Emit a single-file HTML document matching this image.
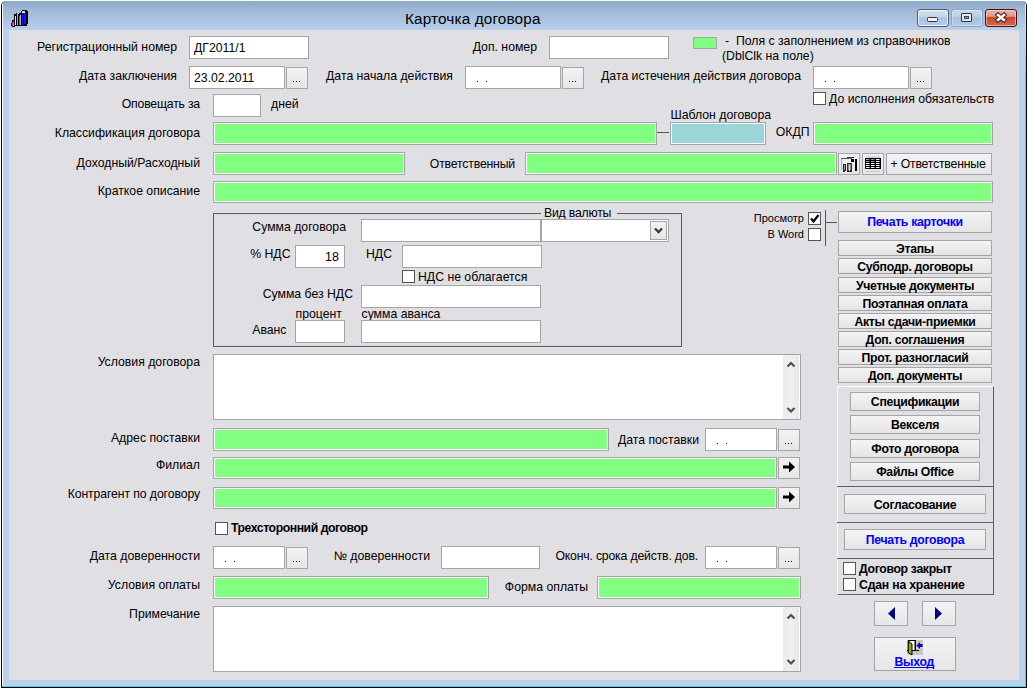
<!DOCTYPE html>
<html><head><meta charset="utf-8">
<style>
*{box-sizing:border-box;margin:0;padding:0}
html,body{width:1027px;height:690px;overflow:hidden;background:#fff;font-family:"Liberation Sans",sans-serif;color:#000}
#win{position:absolute;left:1px;top:1px;width:1026px;height:687px;border-left:1px solid #000;border-right:1px solid #000;border-bottom:1px solid #000;border-radius:5px 5px 0 0;background:#b9d1ea;overflow:hidden}
#title{position:absolute;left:0;top:0;width:1024px;height:29px;background:linear-gradient(#8ea8c8,#9fb8d6 30%,#b8d0ec)}
#client{position:absolute;left:9px;top:30px;width:1010px;height:650px;background:#e0dfe3}
.l{position:absolute;white-space:nowrap}
.in{position:absolute;background:#fff;border:1px solid #a5a5a5}
.g{position:absolute;background:#80ff80;border:1px solid #a5a5a5;box-shadow:inset 0 0 0 1px #fff}
.btn{position:absolute;border:1px solid #a5a5a5;background:linear-gradient(#f3f3f3,#e6e6e6)}
.dd{position:absolute;left:0;right:0;bottom:4px;text-align:center;font-size:11px;line-height:11px;letter-spacing:-0.5px}
.dt{position:absolute;left:10px;top:3px;font-size:12px;line-height:14px}
.bb{position:absolute;border:1px solid #a5a5a5;background:linear-gradient(#f4f4f4,#e4e4e4);font-weight:bold;font-size:12.25px;letter-spacing:-0.3px;text-align:center;white-space:nowrap}
.cb{position:absolute;background:#fff;border:1px solid #555}
</style></head><body>
<div id="win"><div id="title"></div></div>
<div id="client"></div>

<div style="position:absolute;left:917px;top:9px;width:32px;height:18px;border:1px solid #4b5b73;border-radius:3px;background:linear-gradient(#d6e3f2 0,#c4d6ec 40%,#aac4e2 45%,#b4cbe6 100%);box-shadow:inset 0 0 0 1px rgba(255,255,255,.75)"></div>
<div style="position:absolute;left:927px;top:17px;width:11px;height:5px;border:1px solid #2f3640;border-radius:1.5px;background:#f4efef"></div>
<div style="position:absolute;left:951px;top:9px;width:32px;height:18px;border:1px solid #8ea5c2;border-radius:3px;background:linear-gradient(#c8d9ee 0,#bcd0ea 40%,#a8c1df 45%,#b2c9e5 100%);box-shadow:inset 0 0 0 1px rgba(255,255,255,.35)"></div>
<div style="position:absolute;left:961px;top:13px;width:11px;height:9px;border:1px solid #2f3640;border-radius:1px;background:#e8e8ea"></div>
<div style="position:absolute;left:964px;top:16px;width:5px;height:3px;border:1px solid #3a4250;background:#8fb0d8"></div>
<div style="position:absolute;left:985px;top:9px;width:32px;height:18px;border:1px solid #4a0e10;border-radius:3px;background:linear-gradient(#eab2a6 0,#df9888 40%,#c8472c 45%,#d26b52 100%);box-shadow:inset 0 0 0 1px rgba(255,220,210,.6)"></div>
<svg style="position:absolute;left:994px;top:12px" width="14" height="11" viewBox="0 0 14 11"><path d="M4 3 L10 8 M10 3 L4 8" stroke="#3a1010" stroke-width="4.4" stroke-linecap="square"/><path d="M4 3 L10 8 M10 3 L4 8" stroke="#fff" stroke-width="2.6" stroke-linecap="square"/></svg>
<div style="position:absolute;left:2px;top:4px;width:1px;height:683px;background:#fff"></div>
<div style="position:absolute;left:1025px;top:4px;width:1px;height:683px;background:linear-gradient(#dff0fb 0,#b8e6f8 26px,#3fd6f2 70px)"></div>
<div style="position:absolute;left:2px;top:686px;width:1024px;height:1px;background:#3fd6f2"></div>
<svg style="position:absolute;left:9px;top:8px" width="20" height="20" viewBox="0 0 20 20"><rect x="5" y="6" width="2" height="12" fill="#000"/><rect x="7" y="5" width="5" height="13" fill="#000"/><rect x="12" y="3" width="6" height="15" fill="#000"/><rect x="13" y="2" width="5" height="1" fill="#000"/><rect x="18" y="3" width="1" height="13" fill="#000"/><rect x="17" y="16" width="1" height="1" fill="#000"/><rect x="6" y="8" width="1" height="9" fill="#e4e4dc"/><rect x="8" y="6" width="1" height="11" fill="#a8a8a8"/><rect x="8" y="5" width="2" height="1" fill="#d8d0c0"/><rect x="10" y="8" width="1" height="9" fill="#ff1a1a"/><rect x="11" y="7" width="1" height="10" fill="#b8b8b8"/><rect x="13" y="5" width="1" height="12" fill="#1414ff"/><rect x="15" y="4" width="2" height="12" fill="#1414ff"/><rect x="13" y="3" width="3" height="2" fill="#e8dcc8"/><rect x="2" y="15" width="1" height="3" fill="#000"/><rect x="3" y="12" width="2" height="3" fill="#000"/><rect x="3" y="15" width="1" height="3" fill="#ff00ff"/><rect x="4" y="13" width="1" height="2" fill="#ff00ff"/><rect x="3" y="18" width="3" height="1" fill="#000"/></svg>
<div class="l" style="top:10px;font-size:15.3px;line-height:18px;left:405px;letter-spacing:0.15px;">Карточка договора</div>
<div class="l" style="top:40px;font-size:12.25px;line-height:14px;right:850px;text-align:right;">Регистрационный номер</div>
<div class="in" style="left:189px;top:36px;width:120px;height:23px;"></div>
<div class="l" style="top:41px;font-size:12.25px;line-height:14px;left:194px;">ДГ2011/1</div>
<div class="l" style="top:40px;font-size:12.25px;line-height:14px;right:490px;text-align:right;">Доп. номер</div>
<div class="in" style="left:549px;top:36px;width:120px;height:23px;"></div>
<div class="g" style="left:693px;top:37px;width:24px;height:12px;box-shadow:none"></div>
<div class="l" style="top:34px;font-size:12.25px;line-height:14px;left:725px;">-&nbsp; Поля с заполнением из справочников</div>
<div class="l" style="top:49px;font-size:12.25px;line-height:14px;left:722px;">(DblClk на поле)</div>
<div class="l" style="top:69px;font-size:12.25px;line-height:14px;right:850px;text-align:right;">Дата заключения</div>
<div class="in" style="left:189px;top:66px;width:96px;height:23px;"></div>
<div class="l" style="top:71px;font-size:12.25px;line-height:14px;left:194px;">23.02.2011</div>
<div class="btn" style="left:286px;top:67px;width:22px;height:22px;"></div>
<div style="position:absolute;left:293px;top:81px;width:1px;height:1px;background:#000"></div>
<div style="position:absolute;left:296px;top:81px;width:1px;height:1px;background:#000"></div>
<div style="position:absolute;left:299px;top:81px;width:1px;height:1px;background:#000"></div>
<div class="l" style="top:69px;font-size:12.25px;line-height:14px;right:574px;text-align:right;">Дата начала действия</div>
<div class="in" style="left:465px;top:66px;width:96px;height:23px;"></div>
<div style="position:absolute;left:477px;top:81px;width:1px;height:1px;background:#000"></div>
<div style="position:absolute;left:486px;top:81px;width:1px;height:1px;background:#000"></div>
<div class="btn" style="left:562px;top:67px;width:22px;height:22px;"></div>
<div style="position:absolute;left:569px;top:81px;width:1px;height:1px;background:#000"></div>
<div style="position:absolute;left:572px;top:81px;width:1px;height:1px;background:#000"></div>
<div style="position:absolute;left:575px;top:81px;width:1px;height:1px;background:#000"></div>
<div class="l" style="top:69px;font-size:12.25px;line-height:14px;right:226px;text-align:right;">Дата истечения действия договора</div>
<div class="in" style="left:813px;top:66px;width:96px;height:23px;"></div>
<div style="position:absolute;left:825px;top:81px;width:1px;height:1px;background:#000"></div>
<div style="position:absolute;left:834px;top:81px;width:1px;height:1px;background:#000"></div>
<div class="btn" style="left:910px;top:67px;width:22px;height:22px;"></div>
<div style="position:absolute;left:917px;top:81px;width:1px;height:1px;background:#000"></div>
<div style="position:absolute;left:920px;top:81px;width:1px;height:1px;background:#000"></div>
<div style="position:absolute;left:923px;top:81px;width:1px;height:1px;background:#000"></div>
<div class="l" style="top:97px;font-size:12.25px;line-height:14px;right:827px;text-align:right;letter-spacing:-0.2px;">Оповещать за</div>
<div class="in" style="left:213px;top:94px;width:48px;height:23px;"></div>
<div class="l" style="top:97px;font-size:12.25px;line-height:14px;left:271px;">дней</div>
<div class="cb" style="left:813px;top:92px;width:13px;height:13px;"></div>
<div class="l" style="top:92px;font-size:12.25px;line-height:14px;left:829px;">До исполнения обязательств</div>
<div class="l" style="top:108px;font-size:12.25px;line-height:14px;left:670.5px;">Шаблон договора</div>
<div class="l" style="top:126px;font-size:12.25px;line-height:14px;right:827px;text-align:right;">Классификация договора</div>
<div class="g" style="left:213px;top:122px;width:444px;height:23px;"></div>
<div style="position:absolute;left:657px;top:132px;width:12px;height:1px;background:#555"></div>
<div style="position:absolute;left:670px;top:122px;width:96px;height:23px;background:#9ad5d9;border:1px solid #a5a5a5;box-shadow:inset 0 0 0 1px #fff"></div>
<div class="l" style="top:125px;font-size:12.25px;line-height:14px;right:217.5px;text-align:right;">ОКДП</div>
<div class="g" style="left:813px;top:122px;width:180px;height:23px;"></div>
<div class="l" style="top:156px;font-size:12.25px;line-height:14px;right:827px;text-align:right;">Доходный/Расходный</div>
<div class="g" style="left:213px;top:152px;width:192px;height:23px;"></div>
<div class="l" style="top:157px;font-size:12.25px;line-height:14px;right:512px;text-align:right;letter-spacing:-0.18px;">Ответственный</div>
<div class="g" style="left:525px;top:152px;width:312px;height:23px;"></div>
<div class="btn" style="left:838px;top:153px;width:22px;height:22px;"></div>
<div class="btn" style="left:862px;top:153px;width:22px;height:22px;"></div>
<div class="btn" style="left:886px;top:153px;width:106px;height:22px;"></div>
<div class="l" style="top:157px;font-size:12.25px;line-height:14px;left:938px;transform:translateX(-50%);letter-spacing:-0.2px;">+ Ответственные</div>
<div class="l" style="top:184px;font-size:12.25px;line-height:14px;right:827px;text-align:right;">Краткое описание</div>
<div class="g" style="left:213px;top:181px;width:780px;height:22px;"></div>
<div style="position:absolute;left:213px;top:213px;width:469px;height:134px;border:1px solid #5a5a5a"></div>
<div style="position:absolute;left:541px;top:205px;width:76px;height:14px;background:#e0dfe3"></div>
<div class="l" style="top:206px;font-size:12.25px;line-height:14px;left:544px;letter-spacing:-0.2px;">Вид валюты</div>
<div class="l" style="top:220px;font-size:12.25px;line-height:14px;right:681px;text-align:right;">Сумма договора</div>
<div class="in" style="left:361px;top:219px;width:180px;height:23px;"></div>
<div class="in" style="left:541px;top:219px;width:128px;height:23px;"></div>
<div class="btn" style="left:650px;top:221px;width:17px;height:19px;"></div>
<div class="l" style="top:247px;font-size:12.25px;line-height:14px;right:736.5px;text-align:right;">% НДС</div>
<div class="in" style="left:295px;top:245px;width:50px;height:23px;"></div>
<div class="l" style="top:250px;font-size:12.5px;line-height:14px;right:688px;text-align:right;">18</div>
<div class="l" style="top:247px;font-size:12.25px;line-height:14px;right:635px;text-align:right;">НДС</div>
<div class="in" style="left:402px;top:245px;width:140px;height:23px;"></div>
<div class="cb" style="left:402px;top:270px;width:13px;height:13px;"></div>
<div class="l" style="top:270px;font-size:12.25px;line-height:14px;left:418px;">НДС не облагается</div>
<div class="l" style="top:287px;font-size:12.25px;line-height:14px;right:674px;text-align:right;">Сумма без НДС</div>
<div class="in" style="left:361px;top:285px;width:180px;height:23px;"></div>
<div class="l" style="top:307px;font-size:12.25px;line-height:14px;left:295.5px;">процент</div>
<div class="l" style="top:307px;font-size:12.25px;line-height:14px;left:361.5px;">сумма аванса</div>
<div class="l" style="top:323px;font-size:12.25px;line-height:14px;right:740.5px;text-align:right;">Аванс</div>
<div class="in" style="left:295px;top:320px;width:50px;height:23px;"></div>
<div class="in" style="left:361px;top:320px;width:180px;height:23px;"></div>
<div class="l" style="top:355px;font-size:12.25px;line-height:14px;right:827px;text-align:right;">Условия договора</div>
<div class="in" style="left:213px;top:354px;width:588px;height:66px;"></div>
<div class="l" style="top:431px;font-size:12.25px;line-height:14px;right:827px;text-align:right;">Адрес поставки</div>
<div class="g" style="left:213px;top:428px;width:396px;height:23px;"></div>
<div class="l" style="top:433px;font-size:12.25px;line-height:14px;right:328px;text-align:right;">Дата поставки</div>
<div class="in" style="left:705px;top:428px;width:72px;height:23px;"></div>
<div style="position:absolute;left:717px;top:443px;width:1px;height:1px;background:#000"></div>
<div style="position:absolute;left:726px;top:443px;width:1px;height:1px;background:#000"></div>
<div class="btn" style="left:778px;top:429px;width:22px;height:22px;"></div>
<div style="position:absolute;left:785px;top:443px;width:1px;height:1px;background:#000"></div>
<div style="position:absolute;left:788px;top:443px;width:1px;height:1px;background:#000"></div>
<div style="position:absolute;left:791px;top:443px;width:1px;height:1px;background:#000"></div>
<div class="l" style="top:458px;font-size:12.25px;line-height:14px;right:827px;text-align:right;">Филиал</div>
<div class="g" style="left:213px;top:457px;width:564px;height:22px;"></div>
<div class="btn" style="left:778px;top:457px;width:22px;height:22px;"></div>
<div class="l" style="top:487px;font-size:12.25px;line-height:14px;right:827px;text-align:right;letter-spacing:-0.1px;">Контрагент по договору</div>
<div class="g" style="left:213px;top:487px;width:564px;height:22px;"></div>
<div class="btn" style="left:778px;top:487px;width:22px;height:22px;"></div>
<div class="cb" style="left:215px;top:522px;width:13px;height:13px;"></div>
<div class="l" style="top:521px;font-size:12.25px;line-height:14px;font-weight:bold;left:231px;letter-spacing:-0.45px;">Трехсторонний договор</div>
<div class="l" style="top:549px;font-size:12.25px;line-height:14px;right:827px;text-align:right;">Дата доверенности</div>
<div class="in" style="left:213px;top:546px;width:72px;height:23px;"></div>
<div style="position:absolute;left:225px;top:561px;width:1px;height:1px;background:#000"></div>
<div style="position:absolute;left:234px;top:561px;width:1px;height:1px;background:#000"></div>
<div class="btn" style="left:286px;top:547px;width:22px;height:22px;"></div>
<div style="position:absolute;left:293px;top:561px;width:1px;height:1px;background:#000"></div>
<div style="position:absolute;left:296px;top:561px;width:1px;height:1px;background:#000"></div>
<div style="position:absolute;left:299px;top:561px;width:1px;height:1px;background:#000"></div>
<div class="l" style="top:549px;font-size:12.25px;line-height:14px;right:597px;text-align:right;">№ доверенности</div>
<div class="in" style="left:441px;top:546px;width:99px;height:23px;"></div>
<div class="l" style="top:549px;font-size:12.25px;line-height:14px;right:329px;text-align:right;letter-spacing:-0.18px;">Оконч. срока действ. дов.</div>
<div class="in" style="left:705px;top:546px;width:72px;height:23px;"></div>
<div style="position:absolute;left:717px;top:561px;width:1px;height:1px;background:#000"></div>
<div style="position:absolute;left:726px;top:561px;width:1px;height:1px;background:#000"></div>
<div class="btn" style="left:778px;top:547px;width:22px;height:22px;"></div>
<div style="position:absolute;left:785px;top:561px;width:1px;height:1px;background:#000"></div>
<div style="position:absolute;left:788px;top:561px;width:1px;height:1px;background:#000"></div>
<div style="position:absolute;left:791px;top:561px;width:1px;height:1px;background:#000"></div>
<div class="l" style="top:578px;font-size:12.25px;line-height:14px;right:827px;text-align:right;">Условия оплаты</div>
<div class="g" style="left:213px;top:576px;width:276px;height:23px;"></div>
<div class="l" style="top:580px;font-size:12.25px;line-height:14px;right:439px;text-align:right;">Форма оплаты</div>
<div class="g" style="left:597px;top:576px;width:204px;height:23px;"></div>
<div class="l" style="top:607px;font-size:12.25px;line-height:14px;right:827px;text-align:right;">Примечание</div>
<div class="in" style="left:213px;top:606px;width:588px;height:66px;"></div>
<div class="l" style="top:211px;font-size:11px;line-height:14px;right:223px;text-align:right;">Просмотр</div>
<div class="l" style="top:227px;font-size:11px;line-height:14px;right:223px;text-align:right;">В Word</div>
<div class="cb" style="left:808px;top:212px;width:13px;height:13px;"></div>
<div class="cb" style="left:808px;top:228px;width:13px;height:13px;"></div>
<svg style="position:absolute;left:808px;top:212px" width="13" height="13" viewBox="0 0 13 13"><path d="M3 6.5 L5.5 9.5 L10.5 3" fill="none" stroke="#000" stroke-width="2.2"/></svg>
<div style="position:absolute;left:825px;top:210px;width:1px;height:36px;background:#555"></div>
<div style="position:absolute;left:825px;top:222px;width:12px;height:1px;background:#555"></div>
<div class="bb" style="left:838px;top:211px;width:154px;height:22px;color:#0000ff;line-height:20px">Печать карточки</div>
<div class="bb" style="left:838px;top:240px;width:154px;height:16px;line-height:16px">Этапы</div>
<div class="bb" style="left:838px;top:258px;width:154px;height:16px;line-height:16px">Субподр. договоры</div>
<div class="bb" style="left:838px;top:277px;width:154px;height:16px;line-height:16px">Учетные документы</div>
<div class="bb" style="left:838px;top:295px;width:154px;height:16px;line-height:16px">Поэтапная оплата</div>
<div class="bb" style="left:838px;top:313px;width:154px;height:16px;line-height:16px">Акты сдачи-приемки</div>
<div class="bb" style="left:838px;top:331px;width:154px;height:16px;line-height:16px">Доп. соглашения</div>
<div class="bb" style="left:838px;top:349px;width:154px;height:16px;line-height:16px">Прот. разногласий</div>
<div class="bb" style="left:838px;top:367px;width:154px;height:16px;line-height:16px">Доп. документы</div>
<div style="position:absolute;left:837px;top:386px;width:157px;height:209px;border-left:1px solid #fff;border-top:1px solid #fff;border-right:1px solid #5f5f5f;border-bottom:1px solid #5f5f5f"></div>
<div style="position:absolute;left:837px;top:486px;width:157px;height:1px;background:#5f5f5f"></div>
<div style="position:absolute;left:837px;top:522px;width:157px;height:1px;background:#5f5f5f"></div>
<div style="position:absolute;left:837px;top:558px;width:157px;height:1px;background:#5f5f5f"></div>
<div class="bb" style="left:850px;top:392px;width:130px;height:19px;line-height:19px">Спецификации</div>
<div class="bb" style="left:850px;top:415px;width:130px;height:19px;line-height:19px">Векселя</div>
<div class="bb" style="left:850px;top:439px;width:130px;height:19px;line-height:19px">Фото договора</div>
<div class="bb" style="left:850px;top:462px;width:130px;height:19px;line-height:19px">Файлы Office</div>
<div class="bb" style="left:844px;top:494px;width:142px;height:20px;line-height:20px">Согласование</div>
<div class="bb" style="left:844px;top:529px;width:142px;height:21px;line-height:20px;color:#0000ff">Печать договора</div>
<div class="cb" style="left:843px;top:562px;width:13px;height:13px;"></div>
<div class="cb" style="left:843px;top:578px;width:13px;height:13px;"></div>
<div class="l" style="top:562px;font-size:12.25px;line-height:14px;font-weight:bold;left:859px;letter-spacing:-0.34px;">Договор закрыт</div>
<div class="l" style="top:578px;font-size:12.25px;line-height:14px;font-weight:bold;left:859px;letter-spacing:-0.2px;">Сдан на хранение</div>
<div class="btn" style="left:874px;top:601px;width:34px;height:25px;"></div>
<div class="btn" style="left:922px;top:601px;width:34px;height:25px;"></div>
<div class="btn" style="left:874px;top:637px;width:82px;height:34px;"></div>
<div class="l" style="top:655px;font-size:12.25px;line-height:14px;font-weight:bold;color:#0000ff;left:894.5px;letter-spacing:-0.3px;">Выход</div>
<div style="position:absolute;left:894px;top:667px;width:40px;height:1px;background:#0000ff"></div>
<svg style="position:absolute;left:650px;top:221px" width="17" height="19" viewBox="0 0 17 19"><path d="M5 7.5 L8.5 11 L12 7.5" fill="none" stroke="#3c3c3c" stroke-width="2.4"/></svg>
<div style="position:absolute;left:783px;top:355px;width:16px;height:64px;background:linear-gradient(90deg,#eaeaea,#f0f0f0 50%,#e8e8e8)"></div>
<svg style="position:absolute;left:783px;top:361px" width="16" height="8" viewBox="0 0 16 8"><path d="M4.5 5.5 L8 2 L11.5 5.5" fill="none" stroke="#505050" stroke-width="2.2"/></svg>
<svg style="position:absolute;left:783px;top:406px" width="16" height="8" viewBox="0 0 16 8"><path d="M4.5 2 L8 5.5 L11.5 2" fill="none" stroke="#505050" stroke-width="2.2"/></svg>
<div style="position:absolute;left:783px;top:607px;width:16px;height:64px;background:linear-gradient(90deg,#eaeaea,#f0f0f0 50%,#e8e8e8)"></div>
<svg style="position:absolute;left:783px;top:613px" width="16" height="8" viewBox="0 0 16 8"><path d="M4.5 5.5 L8 2 L11.5 5.5" fill="none" stroke="#505050" stroke-width="2.2"/></svg>
<svg style="position:absolute;left:783px;top:658px" width="16" height="8" viewBox="0 0 16 8"><path d="M4.5 2 L8 5.5 L11.5 2" fill="none" stroke="#505050" stroke-width="2.2"/></svg>
<svg style="position:absolute;left:778px;top:457px" width="22" height="22" viewBox="0 0 22 22"><path d="M5 8.5 H11 V4.5 L17 10 L11 15.5 V11.5 H5Z" fill="#000"/></svg>
<svg style="position:absolute;left:778px;top:487px" width="22" height="22" viewBox="0 0 22 22"><path d="M5 8.5 H11 V4.5 L17 10 L11 15.5 V11.5 H5Z" fill="#000"/></svg>
<svg style="position:absolute;left:838px;top:153px" width="22" height="22" viewBox="0 0 22 22"><rect x="3" y="5" width="8" height="1" fill="#555"/><rect x="9" y="4" width="6" height="1" fill="#333"/><rect x="11" y="5" width="3" height="1" fill="#777"/><rect x="15" y="4" width="1" height="1" fill="#000"/><rect x="3" y="6" width="1" height="11" fill="#aaa"/><rect x="13" y="6" width="3" height="3" fill="#000"/><rect x="17" y="6" width="2" height="12" fill="#000"/><rect x="5" y="11" width="3" height="7" fill="#222"/><rect x="6" y="12" width="1" height="5" fill="#999"/><rect x="5" y="18" width="2" height="1" fill="#333"/><rect x="9" y="10" width="5" height="8" fill="#333"/><rect x="10" y="11" width="3" height="6" fill="#8a8a8a"/><rect x="11" y="12" width="1" height="6" fill="#ddd"/><rect x="9" y="18" width="5" height="1" fill="#222"/></svg>
<svg style="position:absolute;left:862px;top:153px" width="22" height="22" viewBox="0 0 22 22"><rect x="4" y="3.5" width="14" height="1" fill="#c0c0c0"/><rect x="4" y="18" width="14" height="1" fill="#c8c8c8"/><rect x="3" y="5" width="16" height="11" fill="#000"/><rect x="4" y="6" width="3.5" height="1" fill="#9a9a9a"/><rect x="9" y="6" width="3.5" height="1" fill="#9a9a9a"/><rect x="14" y="6" width="3.5" height="1" fill="#fff"/><rect x="4" y="8" width="3.5" height="1" fill="#9a9a9a"/><rect x="9" y="8" width="3.5" height="1" fill="#9a9a9a"/><rect x="14" y="8" width="3.5" height="1" fill="#fff"/><rect x="4" y="10" width="3.5" height="1" fill="#fff"/><rect x="9" y="10" width="3.5" height="1" fill="#fff"/><rect x="14" y="10" width="3.5" height="1" fill="#fff"/><rect x="4" y="12" width="3.5" height="1" fill="#fff"/><rect x="9" y="12" width="3.5" height="1" fill="#fff"/><rect x="14" y="12" width="3.5" height="1" fill="#fff"/><rect x="4" y="14" width="3.5" height="1" fill="#fff"/><rect x="9" y="14" width="3.5" height="1" fill="#fff"/><rect x="14" y="14" width="3.5" height="1" fill="#fff"/></svg>
<svg style="position:absolute;left:874px;top:601px" width="34" height="25" viewBox="0 0 34 25"><path d="M21 6 L21 19 L14 12.5Z" fill="#000080"/></svg>
<svg style="position:absolute;left:922px;top:601px" width="34" height="25" viewBox="0 0 34 25"><path d="M13 6 L13 19 L20 12.5Z" fill="#000080"/></svg>
<svg style="position:absolute;left:907px;top:640px" width="17" height="16" viewBox="0 0 17 16"><rect x="0" y="0" width="16" height="15" fill="#c8c8c8"/><rect x="1" y="0" width="8" height="10.5" fill="#000"/><rect x="2.5" y="1" width="5" height="9" fill="#fff"/><path d="M0 10 H12 V11 H0Z" fill="#000"/><path d="M1.2 1.3 L5 4 V15 L1.2 12.5Z" fill="#a0a000" stroke="#000" stroke-width="1"/><path d="M9.5 5.5 L13 2 V4 H15.5 V7 H13 V9Z" fill="#0000c0"/></svg>
</body></html>
